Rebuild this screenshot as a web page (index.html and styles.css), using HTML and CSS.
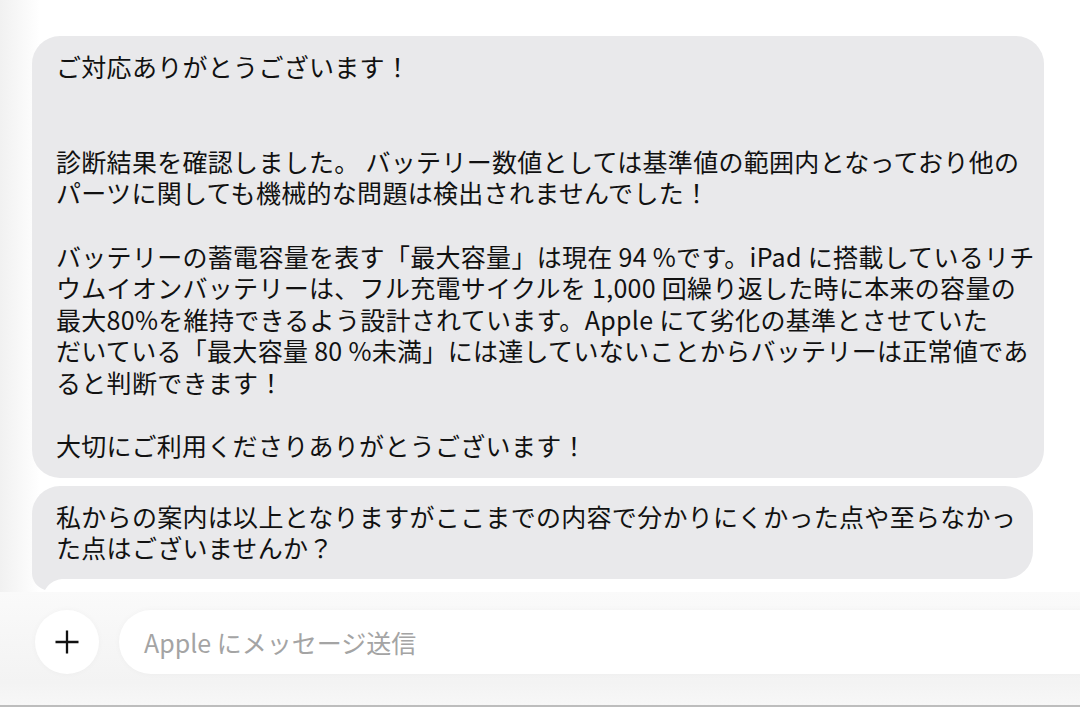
FILE: index.html
```html
<!DOCTYPE html>
<html lang="ja">
<head>
    <meta charset="UTF-8">
    <meta name="viewport" content="width=device-width, initial-scale=1.0">
    <title>Apple サポート</title>
    <link rel="stylesheet" href="styles.css">
</head>
<body>
    <div class="page">
        <div class="chat">
            <div class="bubble bubble-main">
                <p>ご対応ありがとうございます！</p>
                <p class="gap-2">診断結果を確認しました。 バッテリー数値としては基準値の範囲内となっており他の<br>パーツに関しても機械的な問題は検出されませんでした！</p>
                <p class="gap-1">バッテリーの蓄電容量を表す「最大容量」は現在 94 %です。iPad に搭載しているリチ<br>ウムイオンバッテリーは、フル充電サイクルを 1,000 回繰り返した時に本来の容量の<br>最大80%を維持できるよう設計されています。Apple にて劣化の基準とさせていた<br>だいている「最大容量 80 %未満」には達していないことからバッテリーは正常値であ<br>ると判断できます！</p>
                <p class="gap-1">大切にご利用くださりありがとうございます！</p>
            </div>

            <div class="bubble bubble-last">
                <!-- tail, drawn under the text -->
                <svg class="tail" width="30" height="41" viewBox="0 0 30 41">
                    <path d="M0 0 L0 24 C0 32 5 38 13 41 C16 36 21 31 30 30 L30 0 Z" fill="#e9e9eb"/>
                </svg>
                <p>私からの案内は以上となりますがここまでの内容で分かりにくかった点や至らなかっ<br>た点はございませんか？</p>
            </div>
        </div>

        <div class="composer">
            <button class="plus" type="button" aria-label="追加">
                <svg width="26" height="26" viewBox="0 0 26 26">
                    <path d="M13 1.5 V24.5 M1.5 13 H24.5" stroke="#111" stroke-width="2.3" fill="none"/>
                </svg>
            </button>
            <div class="field">Apple にメッセージ送信</div>
        </div>
    </div>
</body>
</html>
```

FILE: styles.css
```css
body {
    margin: 0;
    font-family: "Noto Sans CJK JP", "Noto Sans", sans-serif;
    color: #111;
    background: linear-gradient(to right, #f1f1f1 0, #ffffff 40px);
}

.page {
    height: 100vh;
    display: flex;
    flex-direction: column;
    overflow: hidden;
}

.chat {
    flex: 1;
    display: flex;
    flex-direction: column;
    align-items: flex-start;
    gap: 8px;
    padding: 36px 0 0 32px;
}

.bubble {
    position: relative;
    box-sizing: border-box;
    background: #e9e9eb;
    border-radius: 28px;
    padding: 15px 0 16px 24px;
    font-size: 25px;
    line-height: 31.6px;
    letter-spacing: 0.3px;
    white-space: nowrap;
}

.bubble-main {
    width: 1012px;
}

.bubble-last {
    width: 1001px;
    padding-bottom: 15px;
}

.bubble p {
    position: relative; /* keeps text above the tail */
    margin: 0;
}

/* blank lines between paragraphs */
.bubble .gap-1 {
    margin-top: 31.6px;
}

.bubble .gap-2 {
    margin-top: 63.2px;
}

.tail {
    position: absolute;
    left: 0;
    bottom: -11px;
    display: block;
}

.composer {
    height: 115px;
    flex-shrink: 0;
    box-sizing: border-box;
    padding: 18px 0 0 35px;
    display: flex;
    align-items: flex-start;
    gap: 20px;
    background: linear-gradient(#fafafa, #f3f3f3 80%, #f7f7f7);
    border-bottom: 2px solid #bdbdbd;
}

.plus {
    width: 64px;
    height: 64px;
    flex-shrink: 0;
    border: none;
    border-radius: 50%;
    background: #fff;
    padding: 0;
    display: flex;
    align-items: center;
    justify-content: center;
    box-shadow: 0 0 6px rgba(0, 0, 0, 0.03);
}

.field {
    flex: 1;
    height: 64px;
    box-sizing: border-box;
    margin-right: -40px;
    padding-left: 25px;
    display: flex;
    align-items: center;
    background: #fff;
    border-radius: 32px;
    font-size: 25px;
    color: #a4a4a4;
    box-shadow: 0 0 6px rgba(0, 0, 0, 0.03);
}
```
